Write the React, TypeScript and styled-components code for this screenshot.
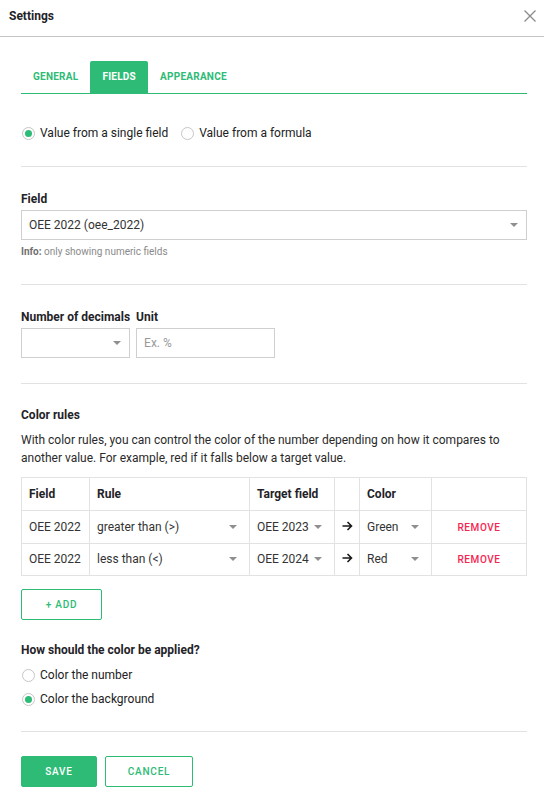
import React from 'react'
import styled, { createGlobalStyle } from 'styled-components'

const GREEN = '#2dbb76'
const BORDER = '#e2e2e2'

const Global = createGlobalStyle`
  body {
    margin: 0;
    background: #fff;
    font-family: Roboto, "Liberation Sans", Arial, sans-serif;
    color: #222;
    font-size: 12px;
  }
  * { box-sizing: border-box; }
`

const Header = styled.div`
  height: 37px;
  display: flex;
  align-items: center;
  justify-content: space-between;
  padding: 0 6px 4px 9px;
  border-bottom: 1px solid #c4c4c4;
`

const Title = styled.div`
  font-size: 12px;
  font-weight: 700;
  color: #1f2328;
`

const CloseButton = styled.button`
  border: none;
  background: none;
  padding: 0;
  display: flex;
  color: #8a8a8a;
  cursor: pointer;
`

const Body = styled.div`
  padding: 0 17px 0 21px;
`

const Tabs = styled.div`
  margin-top: 24px;
  display: flex;
  height: 33px;
  border-bottom: 1px solid ${GREEN};
`

const Tab = styled.div<{ $active?: boolean }>`
  padding: 0 12px 1px;
  display: flex;
  align-items: center;
  font-size: 10px;
  font-weight: 700;
  letter-spacing: 0.25px;
  color: ${({ $active }) => ($active ? '#fff' : GREEN)};
  background: ${({ $active }) => ($active ? GREEN : 'transparent')};
  border-radius: 2px 2px 0 0;
`

const Section = styled.div<{ $pt: number; $pb: number }>`
  padding: ${({ $pt, $pb }) => `${$pt}px 0 ${$pb}px`};
  border-bottom: 1px solid ${BORDER};
`

const RadioRow = styled.div`
  display: flex;
  gap: 12px;
`

const RadioStack = styled.div`
  display: flex;
  flex-direction: column;
  gap: 4px;
  margin-top: 8px;
`

const RadioLabel = styled.label`
  display: flex;
  align-items: center;
  height: 20px;
  gap: 5px;
  color: #222;
  font-size: 12px;
`

const RadioCircle = styled.span<{ $checked?: boolean }>`
  width: 13px;
  height: 13px;
  border-radius: 50%;
  border: 1px solid #c6c6c6;
  display: flex;
  align-items: center;
  justify-content: center;
  margin-left: 1px;

  &::after {
    content: '';
    width: 7px;
    height: 7px;
    border-radius: 50%;
    background: ${({ $checked }) => ($checked ? GREEN : 'transparent')};
  }
`

const Label = styled.div`
  font-size: 12px;
  font-weight: 700;
  line-height: 15px;
  color: #1f2328;
  margin-bottom: 3px;
`

const SelectBox = styled.div<{ $w?: number }>`
  height: 30px;
  width: ${({ $w }) => ($w ? `${$w}px` : '100%')};
  border: 1px solid #cfcfcf;
  display: flex;
  align-items: center;
  justify-content: space-between;
  padding: 0 8px 0 7px;
  color: #333;
  font-size: 12px;
`

const Caret = styled.span`
  width: 0;
  height: 0;
  border-left: 4px solid transparent;
  border-right: 4px solid transparent;
  border-top: 4px solid #8f8f8f;
`

const TextInput = styled.input`
  height: 30px;
  width: 139px;
  border: 1px solid #cfcfcf;
  padding: 0 7px;
  font-family: inherit;
  font-size: 12px;
  color: #333;
  outline: none;

  &::placeholder {
    color: #9a9a9a;
  }
`

const Info = styled.div`
  margin-top: 6px;
  font-size: 10px;
  line-height: 12px;
  color: #8a8a8a;

  b {
    color: #6f6f6f;
    font-weight: 700;
  }
`

const Columns = styled.div`
  display: flex;
  gap: 6px;
`

const Paragraph = styled.p`
  margin: 8px 0 10px;
  line-height: 18px;
  font-size: 12px;
  color: #2a2a2a;
`

const Table = styled.table`
  width: 100%;
  border-collapse: collapse;
  table-layout: fixed;
`

const Th = styled.th<{ $w?: number }>`
  width: ${({ $w }) => ($w ? `${$w}px` : 'auto')};
  height: 33px;
  border: 1px solid ${BORDER};
  text-align: left;
  padding: 0 7px;
  font-size: 12px;
  font-weight: 700;
  color: #1f2328;
`

const Td = styled.td<{ $center?: boolean }>`
  height: 32.5px;
  border: 1px solid ${BORDER};
  padding: 0 7px;
  font-size: 12px;
  color: #333;
  text-align: ${({ $center }) => ($center ? 'center' : 'left')};
`

const CellSelect = styled.div`
  display: flex;
  align-items: center;
  justify-content: space-between;
  padding-right: 5px;
`

const RemoveButton = styled.button`
  border: none;
  background: none;
  color: #f5254f;
  font-family: inherit;
  font-size: 10px;
  font-weight: 500;
  letter-spacing: 0.6px;
  cursor: pointer;
  padding: 0;
`

const OutlineButton = styled.button<{ $w: number }>`
  width: ${({ $w }) => $w}px;
  height: 31px;
  border: 1px solid ${GREEN};
  background: #fff;
  color: ${GREEN};
  border-radius: 2px;
  font-family: inherit;
  font-size: 10px;
  font-weight: 500;
  letter-spacing: 0.8px;
  cursor: pointer;
`

const SolidButton = styled(OutlineButton)`
  background: ${GREEN};
  color: #fff;
`

const AddRow = styled.div`
  margin-top: 13px;
  display: flex;
`

const Question = styled.div`
  margin-top: 23px;
  font-size: 12px;
  font-weight: 700;
  color: #1f2328;
`

const Footer = styled.div`
  display: flex;
  gap: 8px;
  padding-top: 24px;
`

const Arrow = () => (
  <svg width="11" height="10" viewBox="0 0 11 10" fill="none" stroke="#1a1a1a" strokeWidth="1.6">
    <path d="M0.5 5h9M5.5 1l4 4-4 4" />
  </svg>
)

const rules = [
  { field: 'OEE 2022', rule: 'greater than (>)', target: 'OEE 2023', color: 'Green' },
  { field: 'OEE 2022', rule: 'less than (<)', target: 'OEE 2024', color: 'Red' },
]

const Radio = ({ checked, children }: { checked?: boolean; children: React.ReactNode }) => (
  <RadioLabel>
    <RadioCircle $checked={checked} />
    {children}
  </RadioLabel>
)

export default function App() {
  return (
    <>
      <Global />
      <Header>
        <Title>Settings</Title>
        <CloseButton>
          <svg width="16" height="16" viewBox="0 0 16 16" stroke="currentColor" strokeWidth="1.3">
            <path d="M2.5 2.5l11 11M13.5 2.5l-11 11" />
          </svg>
        </CloseButton>
      </Header>
      <Body>
        <Tabs>
          <Tab>GENERAL</Tab>
          <Tab $active>FIELDS</Tab>
          <Tab>APPEARANCE</Tab>
        </Tabs>

        <Section $pt={29} $pb={23}>
          <RadioRow>
            <Radio checked>Value from a single field</Radio>
            <Radio>Value from a formula</Radio>
          </RadioRow>
        </Section>

        <Section $pt={25} $pb={26}>
          <Label>Field</Label>
          <SelectBox>
            OEE 2022 (oee_2022)
            <Caret />
          </SelectBox>
          <Info>
            <b>Info:</b> only showing numeric fields
          </Info>
        </Section>

        <Section $pt={25} $pb={25}>
          <Columns>
            <div>
              <Label>Number of decimals</Label>
              <SelectBox $w={109}>
                <span />
                <Caret />
              </SelectBox>
            </div>
            <div>
              <Label>Unit</Label>
              <TextInput placeholder="Ex. %" />
            </div>
          </Columns>
        </Section>

        <Section $pt={24} $pb={22}>
          <Label>Color rules</Label>
          <Paragraph>
            With color rules, you can control the color of the number depending on how it compares to
            another value. For example, red if it falls below a target value.
          </Paragraph>
          <Table>
            <thead>
              <tr>
                <Th $w={68}>Field</Th>
                <Th $w={160}>Rule</Th>
                <Th $w={85}>Target field</Th>
                <Th $w={25} />
                <Th $w={72}>Color</Th>
                <Th />
              </tr>
            </thead>
            <tbody>
              {rules.map((r, i) => (
                <tr key={i}>
                  <Td>{r.field}</Td>
                  <Td>
                    <CellSelect>
                      {r.rule}
                      <Caret />
                    </CellSelect>
                  </Td>
                  <Td>
                    <CellSelect>
                      {r.target}
                      <Caret />
                    </CellSelect>
                  </Td>
                  <Td $center>
                    <Arrow />
                  </Td>
                  <Td>
                    <CellSelect>
                      {r.color}
                      <Caret />
                    </CellSelect>
                  </Td>
                  <Td $center>
                    <RemoveButton>REMOVE</RemoveButton>
                  </Td>
                </tr>
              ))}
            </tbody>
          </Table>
          <AddRow>
            <OutlineButton $w={81}>+ ADD</OutlineButton>
          </AddRow>
          <Question>How should the color be applied?</Question>
          <RadioStack>
            <Radio>Color the number</Radio>
            <Radio checked>Color the background</Radio>
          </RadioStack>
        </Section>

        <Footer>
          <SolidButton $w={76}>SAVE</SolidButton>
          <OutlineButton $w={88}>CANCEL</OutlineButton>
        </Footer>
      </Body>
    </>
  )
}
